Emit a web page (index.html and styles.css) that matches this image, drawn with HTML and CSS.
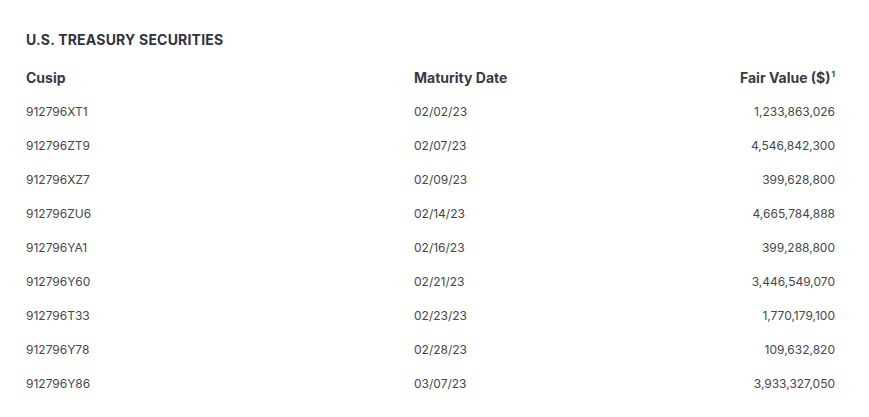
FILE: index.html
```html
<!DOCTYPE html>
<html lang="en">
<head>
<meta charset="utf-8">
<title>U.S. Treasury Securities</title>
<link rel="stylesheet" href="styles.css">
</head>
<body>
<section class="holdings">
  <h2 class="title">U.S. TREASURY SECURITIES</h2>
  <table class="grid">
    <thead>
      <tr><th class="c1">Cusip</th><th class="c2">Maturity Date</th><th class="c3">Fair Value ($)<sup>1</sup></th></tr>
    </thead>
    <tbody>
      <tr><td>912796XT1</td><td>02/02/23</td><td class="num">1,233,863,026</td></tr>
      <tr><td>912796ZT9</td><td>02/07/23</td><td class="num">4,546,842,300</td></tr>
      <tr><td>912796XZ7</td><td>02/09/23</td><td class="num">399,628,800</td></tr>
      <tr><td>912796ZU6</td><td>02/14/23</td><td class="num">4,665,784,888</td></tr>
      <tr><td>912796YA1</td><td>02/16/23</td><td class="num">399,288,800</td></tr>
      <tr><td>912796Y60</td><td>02/21/23</td><td class="num">3,446,549,070</td></tr>
      <tr><td>912796T33</td><td>02/23/23</td><td class="num">1,770,179,100</td></tr>
      <tr><td>912796Y78</td><td>02/28/23</td><td class="num">109,632,820</td></tr>
      <tr><td>912796Y86</td><td>03/07/23</td><td class="num">3,933,327,050</td></tr>
    </tbody>
  </table>
</section>
</body>
</html>
```
FILE: styles.css
```css
html, body { margin: 0; padding: 0; background: #fff; }
body { font-family: "Inter", "Liberation Sans", sans-serif; color: #444; }
.holdings { padding: 30px 34px 0 26px; }
.title { margin: 0; font-size: 14px; font-weight: 700; color: #33323f; line-height: 20px; letter-spacing: 0.2px; }
.grid { width: 100%; border-collapse: collapse; margin-top: 16px; table-layout: fixed; }
.grid th { font-size: 14px; font-weight: 700; color: #3a3946; text-align: left; padding: 0; height: 24px; line-height: 24px; }
.grid th.c1 { width: 388px; }
.grid th.c3 { text-align: right; }
.grid sup { font-size: 8px; line-height: 0; vertical-align: 6px; margin-left: 1px; }
.grid tbody tr:first-child td { padding-top: 5px; }
.grid td { font-size: 12px; color: #474747; padding: 0; height: 34px; line-height: 34px; }
.grid td.num { text-align: right; }
```
